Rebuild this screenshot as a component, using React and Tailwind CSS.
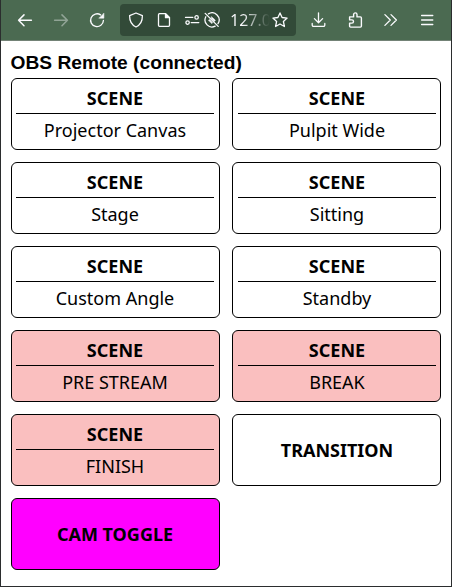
const Icon = ({ children, className = "" }) => (
  <svg
    viewBox="0 0 16 16"
    className={`size-4 shrink-0 ${className}`}
    fill="none"
    stroke="currentColor"
    strokeWidth="1.3"
    strokeLinecap="round"
    strokeLinejoin="round"
  >
    {children}
  </svg>
);

const Toolbar = () => (
  <header className="flex h-[41px] shrink-0 items-center border-b border-[#738276] bg-[#4b6a51] pl-4 text-[#fbfbfe]">
    <Icon>
      <path d="M14.4 8.3H1.6M7 2.9 1.6 8.3 7 13.7" strokeWidth="1.5" />
    </Icon>
    <Icon className="ml-5 opacity-40">
      <path d="M1.6 8.3h12.8M9 2.9l5.4 5.4L9 13.7" strokeWidth="1.5" />
    </Icon>
    <Icon className="ml-5">
      <path d="M11.6 2.9A6.4 6.4 0 1 0 14.4 8.4" />
      <path d="M14.9 1.4v4.8h-4.8z" fill="currentColor" strokeWidth="0.5" />
    </Icon>
    <div className="ml-[15px] flex h-8 w-44 shrink-0 items-center rounded bg-[#324a38] pl-2">
      <Icon>
        <path d="M8 1 14.4 3.6C14.5 9 12.5 13 8 15 3.5 13 1.5 9 1.6 3.6z" />
      </Icon>
      <Icon className="ml-3">
        <path d="M3.5 1.7h6l4 4v7.6a1 1 0 0 1-1 1h-9a1 1 0 0 1-1-1V2.7a1 1 0 0 1 1-1z" />
        <path d="M9.5 1.7v4h4z" fill="currentColor" />
      </Icon>
      <Icon className="ml-3">
        <path d="M1.5 5.4H8.8M7.2 10.6h7.6" />
        <circle cx="12.6" cy="5.4" r="1.7" />
        <circle cx="3.6" cy="10.6" r="1.7" />
      </Icon>
      <Icon className="ml-1">
        <path d="M1.2 1.4l13 13M4.4 1.9A7 7 0 0 1 14 11.6M1.8 4.8A7 7 0 0 0 11.2 14.2" />
        <path d="M7.6 4.8 11.4 8.2 10.4 9.4 7.2 6.2zM4.6 8.2 6 7.4 8.6 10.4 8 11.4z" fill="currentColor" strokeWidth="0.5" />
      </Icon>
      <span className="ml-[10px] w-10 bg-linear-to-r from-[#fbfbfe] from-30% to-[#fbfbfe]/0 to-100% bg-clip-text font-['Noto_Sans',sans-serif] text-base whitespace-nowrap text-transparent">
        127.0
      </span>
      <Icon className="ml-[2px]">
        <path d="m8 .9 2.1 4.6 5 .6-3.7 3.4 1 5L8 12l-4.4 2.5 1-5L.9 6.1l5-.6z" />
      </Icon>
    </div>
    <Icon className="ml-[14px]">
      <path d="M8.5.8v9.8M4.4 6.6l4.1 4.1 4.1-4.1M2.2 11.5v1.6a1.2 1.2 0 0 0 1.2 1.2h10.2a1.2 1.2 0 0 0 1.2-1.2v-1.6" />
    </Icon>
    <Icon className="ml-[21px]">
      <path d="M2.6 4.9h4V2.6a1.7 1.7 0 0 1 3.4 0v2.3h3.4a1 1 0 0 1 1 1v8.2a1 1 0 0 1-1 1H3.6a1 1 0 0 1-1-1v-3H4.9a1.6 1.6 0 0 0 0-3.2H2.6z" strokeWidth="1.4" />
    </Icon>
    <Icon className="ml-[19px]">
      <path d="m2.9 2.6 5.4 5.4-5.4 5.4M9 2.6 14.4 8 9 13.4" />
    </Icon>
    <Icon className="ml-[21px]">
      <path d="M2.6 3.5h11.2M2.6 8h11.2M2.6 12.5h11.2" />
    </Icon>
  </header>
);

const buttons = [
  { title: "SCENE", name: "Projector Canvas", tone: "bg-white" },
  { title: "SCENE", name: "Pulpit Wide", tone: "bg-white" },
  { title: "SCENE", name: "Stage", tone: "bg-white" },
  { title: "SCENE", name: "Sitting", tone: "bg-white" },
  { title: "SCENE", name: "Custom Angle", tone: "bg-white" },
  { title: "SCENE", name: "Standby", tone: "bg-white" },
  { title: "SCENE", name: "PRE STREAM", tone: "bg-[#fabfbf]" },
  { title: "SCENE", name: "BREAK", tone: "bg-[#fabfbf]" },
  { title: "SCENE", name: "FINISH", tone: "bg-[#fabfbf]" },
  { title: "TRANSITION", tone: "bg-white" },
  { title: "CAM TOGGLE", tone: "bg-[#ff00ff]" },
];

const RemoteButton = ({ title, name, tone }) => (
  <button
    className={`flex h-[72px] flex-col justify-center rounded-md border border-black pr-[5px] pl-1 text-center text-lg leading-6 text-black even:pr-1 even:pl-[5px] ${tone}`}
  >
    <span className="w-full font-bold">{title}</span>
    {name && (
      <span className="mt-[3px] w-full border-t border-black pt-1">{name}</span>
    )}
  </button>
);

export default function App() {
  return (
    <div className="flex h-[587px] w-[452px] flex-col overflow-hidden border-x border-b border-[#2b2d2e] bg-white">
      <Toolbar />
      <main className="px-[10px] pt-[10px]">
        <h1 className="-ml-[0.5px] h-[27px] font-['Liberation_Sans',Arial,sans-serif] text-[19.2px] leading-6 font-bold text-black">
          OBS Remote (connected)
        </h1>
        <div className="grid grid-cols-[209px_209px] gap-3 font-['Noto_Sans',sans-serif]">
          {buttons.map((button, i) => (
            <RemoteButton key={i} {...button} />
          ))}
        </div>
      </main>
    </div>
  );
}
